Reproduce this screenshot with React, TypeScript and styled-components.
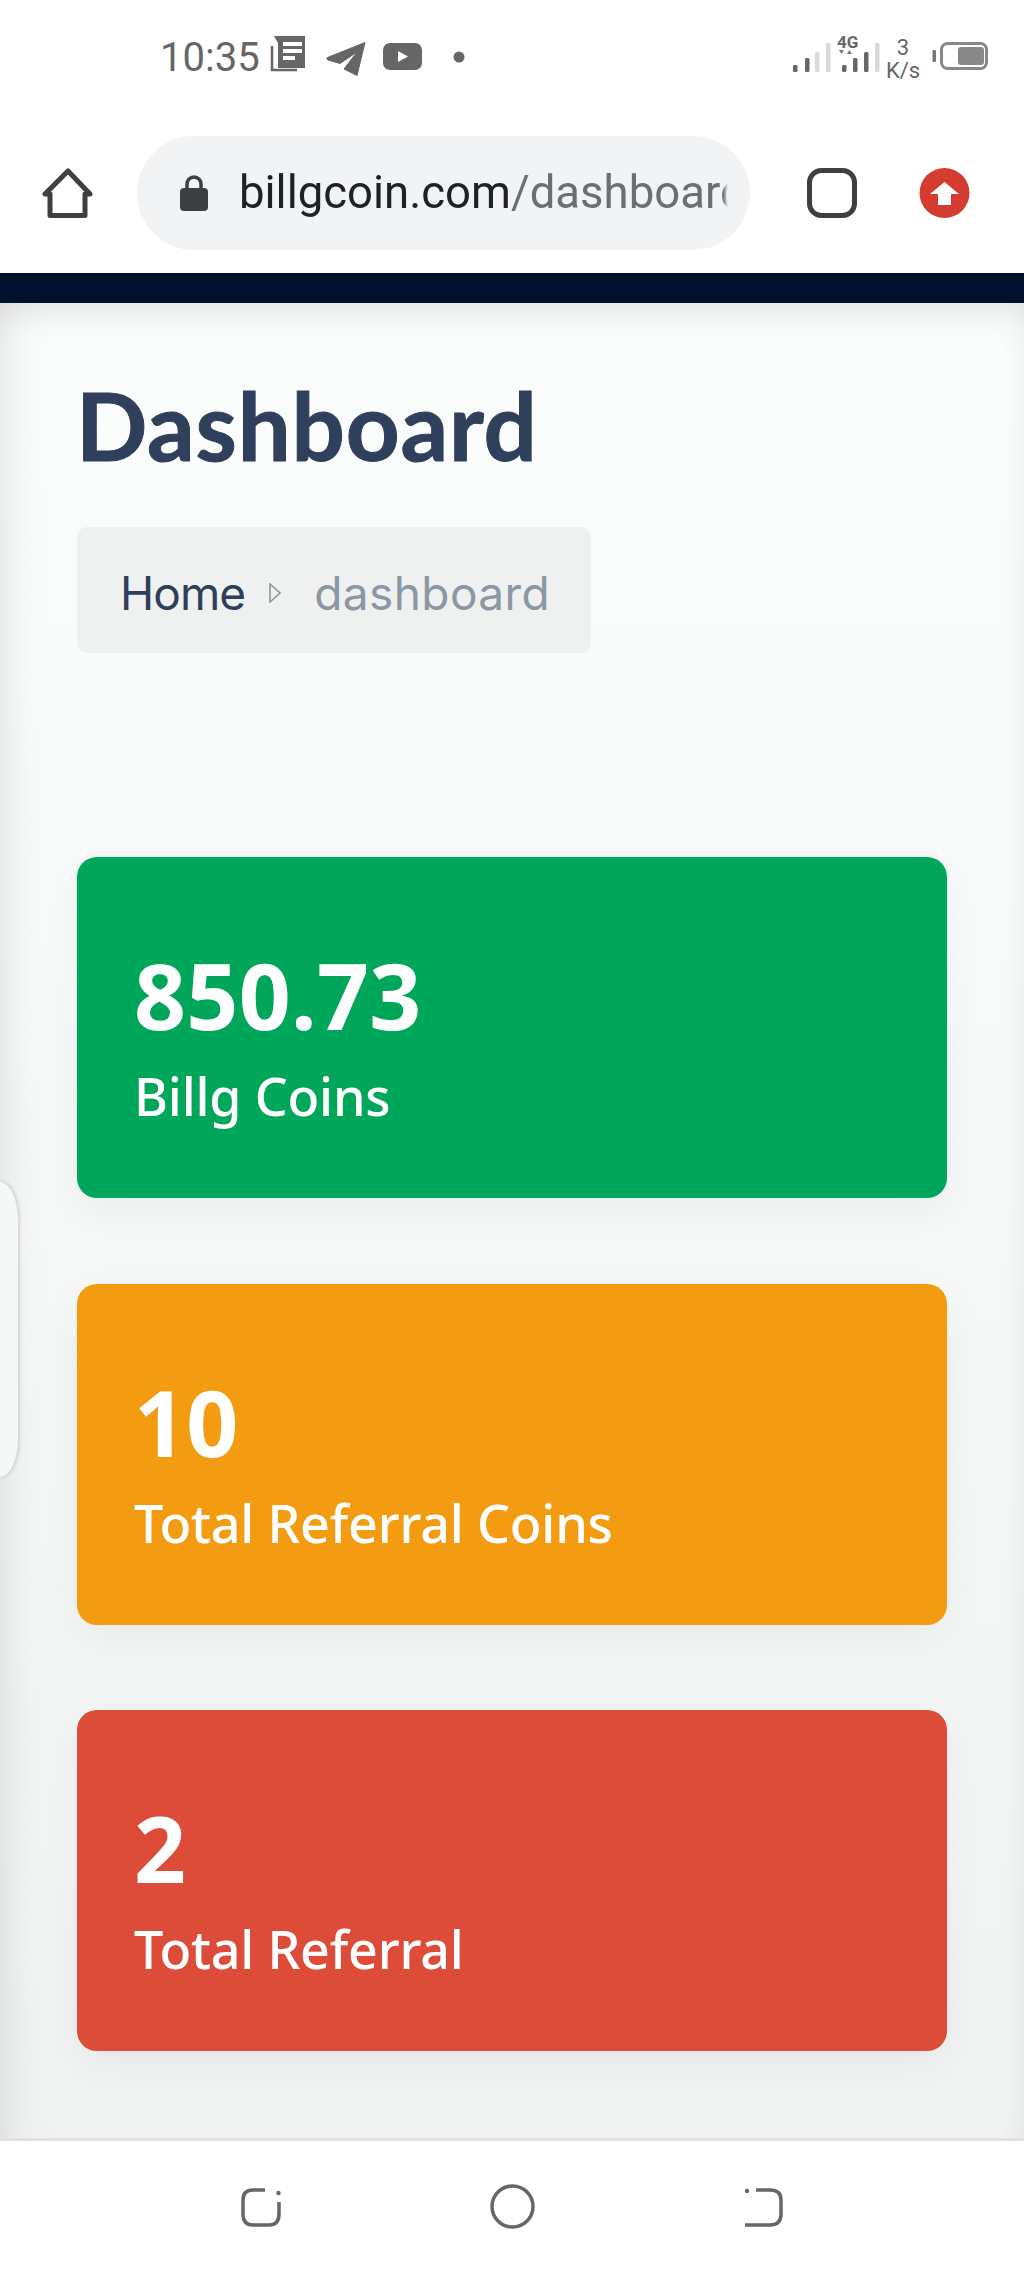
import React from "react";
import styled, { createGlobalStyle } from "styled-components";

const GlobalStyle = createGlobalStyle`
  html, body { margin: 0; padding: 0; background: #fff; }
  * { box-sizing: border-box; }
`;

const Page = styled.div`
  width: 1024px;
  height: 2275px;
  display: flex;
  flex-direction: column;
  overflow: hidden;
  font-family: "Noto Sans", sans-serif;
`;

/* phone status bar */
const StatusBar = styled.div`
  height: 112px;
  flex: none;
  display: flex;
  align-items: flex-start;
  justify-content: space-between;
  padding: 36px 36px 0 160px;
  color: #666;
`;
const StatusLeft = styled.div`
  display: flex;
  align-items: flex-start;
`;
const Clock = styled.span`
  font: 400 40px/44px Roboto, sans-serif;
  width: 110px;
`;
const StatusRight = styled.div`
  display: flex;
  align-items: flex-start;
`;
const StatusGlyph = styled.svg<{ $top?: number; $left?: number }>`
  flex: none;
  margin-top: ${(p) => p.$top ?? 0}px;
  margin-left: ${(p) => p.$left ?? 0}px;
`;
const Speed = styled.div`
  width: 46px;
  margin: 0 6px 0 0;
  display: flex;
  flex-direction: column;
  align-items: center;
  font: 400 22px/23px Roboto, sans-serif;
  color: #666;
`;

/* browser toolbar */
const Toolbar = styled.div`
  height: 161px;
  flex: none;
  display: flex;
  align-items: flex-start;
  padding: 24px 54px 0 42px;
`;
const ToolIcon = styled.svg<{ $left?: number }>`
  flex: none;
  margin-top: 32px;
  margin-left: ${(p) => p.$left ?? 0}px;
`;
const UrlPill = styled.div`
  width: 613px;
  height: 114px;
  margin: 0 57px 0 44px;
  border-radius: 57px;
  background: #f1f3f4;
  display: flex;
  align-items: center;
  padding: 0 22px 0 43px;
  flex: none;
`;
const LockIcon = styled.svg`
  flex: none;
`;
const UrlText = styled.div`
  margin-left: 31px;
  width: 490px;
  overflow: hidden;
  white-space: nowrap;
  font: 400 45.5px/60px Roboto, sans-serif;
  color: #202124;
  -webkit-mask-image: linear-gradient(to right, #000 99%, transparent 100%);
  mask-image: linear-gradient(to right, #000 99%, transparent 100%);
`;
const UrlPath = styled.span`
  color: #6b6f75;
`;
const NavyBar = styled.div`
  height: 30px;
  flex: none;
  background: #00112b;
`;

/* page content */
const Main = styled.main`
  position: relative;
  flex: 1;
  padding: 67px 77px 0;
  background: linear-gradient(to bottom, #fbfcfc 0%, #f9fbfa 30%, #f1f3f3 100%);
  box-shadow: inset 0 22px 36px -14px rgba(0, 0, 0, 0.1), inset 40px 0 40px -26px rgba(0, 0, 0, 0.06),
    inset -30px 0 30px -24px rgba(0, 0, 0, 0.02);
`;
const Title = styled.h1`
  margin: 0 0 0 -1px;
  font: 700 94px/110px Lato, sans-serif;
  letter-spacing: 0.8px;
  -webkit-text-stroke: 1px #303f5b;
  color: #303f5b;
`;
const Crumbs = styled.div`
  margin-top: 47px;
  width: 514px;
  height: 126px;
  border-radius: 10px;
  background: #eef1f0;
  display: flex;
  align-items: center;
  padding: 6px 0 0 43px;
  font: 400 46px/56px Inter, sans-serif;
`;
const CrumbHome = styled.span`
  color: #2f3e5a;
  letter-spacing: -0.9px;
`;
const CrumbCurrent = styled.span`
  color: #8b97a5;
  letter-spacing: 0.4px;
  margin-left: 33px;
`;
const CrumbArrow = styled.svg`
  margin-left: 24px;
  flex: none;
`;
const Cards = styled.div`
  margin-top: 204px;
  display: flex;
  flex-direction: column;
  gap: 85.5px;
`;
const Card = styled.div<{ $bg: string }>`
  height: 341px;
  border-radius: 20px;
  background: ${(p) => p.$bg};
  padding: 88px 57px 0;
  color: #fff;
  box-shadow: 0 12px 40px rgba(0, 0, 0, 0.05);
`;
const CardValue = styled.div`
  font: 700 91px/100px "Noto Sans", sans-serif;
  letter-spacing: 0.3px;
`;
const CardLabel = styled.div`
  margin-top: 21px;
  font: 500 52px/60px "Noto Sans", sans-serif;
  letter-spacing: -0.2px;
`;

/* the half hidden handle on the left edge */
const SideHandle = styled.div`
  position: absolute;
  left: 0;
  top: 879px;
  width: 18px;
  height: 295px;
  background: #f6f8f7;
  border-radius: 0 18px 18px 0 / 0 38px 38px 0;
  box-shadow: 1px 0 4px rgba(0, 0, 0, 0.18);
`;

/* android nav */
const BottomNav = styled.div`
  height: 137px;
  flex: none;
  background: #fff;
  border-top: 3px solid #dfe1e3;
  display: flex;
  align-items: flex-start;
  padding: 46px 0 0 240px;
`;
const NavIcon = styled.svg<{ $gap: number; $top?: number }>`
  flex: none;
  margin-right: ${(p) => p.$gap}px;
  margin-top: ${(p) => p.$top ?? 0}px;
`;

const NewsIcon = () => (
  <StatusGlyph width="36" height="36" viewBox="0 0 36 36">
    <path d="M4 0H35V32H8V7Z" fill="#666" />
    <path d="M2 10V34H27" fill="none" stroke="#666" strokeWidth="2.5" />
    <rect x="13" y="6" width="19" height="4" fill="#fff" />
    <rect x="13" y="13" width="19" height="4" fill="#fff" />
    <rect x="13" y="20" width="12" height="4" fill="#fff" />
  </StatusGlyph>
);

const TelegramIcon = () => (
  <StatusGlyph $top={6} $left={20} width="40" height="34" viewBox="0 0 40 34">
    <path d="M39 0.5L1.5 15.5Q0 17 2 18L14 21.5L31 10L18 27L31 33.5L39 0.5Z" fill="#666" stroke="#666" strokeLinejoin="round" />
  </StatusGlyph>
);

const YoutubeIcon = () => (
  <StatusGlyph $top={7} $left={17} width="39" height="27" viewBox="0 0 39 27">
    <rect width="39" height="27" rx="7" fill="#666" />
    <path d="M15 8L25 13.5L15 19Z" fill="#fff" />
  </StatusGlyph>
);

const Dot = () => (
  <StatusGlyph $top={15} $left={31} width="12" height="12" viewBox="0 0 12 12">
    <circle cx="6" cy="6" r="5.5" fill="#666" />
  </StatusGlyph>
);

const SimOne = () => (
  <StatusGlyph width="45" height="36" viewBox="0 0 45 36">
    <rect x="6" y="29" width="4.5" height="7" rx="1.5" fill="#666" />
    <rect x="18" y="22" width="4.5" height="14" rx="1.5" fill="#666" />
    <rect x="28" y="16" width="4.5" height="20" rx="1.5" fill="#d9d9d9" />
    <rect x="39" y="7" width="4.5" height="29" rx="1.5" fill="#d9d9d9" />
  </StatusGlyph>
);

const SimTwo = () => (
  <StatusGlyph width="48" height="36" viewBox="0 0 48 36">
    <text x="5" y="12" fontFamily="Roboto, sans-serif" fontWeight="700" fontSize="17" fill="#666">4G</text>
    <path d="M7 14H12L9.5 18ZM15 18H20L17.5 14Z" fill="#777" />
    <rect x="10" y="29" width="4.5" height="7" rx="1.5" fill="#666" />
    <rect x="21" y="22" width="4.5" height="14" rx="1.5" fill="#666" />
    <rect x="32" y="16" width="4.5" height="20" rx="1.5" fill="#666" />
    <rect x="43" y="7" width="4.5" height="29" rx="1.5" fill="#d9d9d9" />
  </StatusGlyph>
);

const Battery = () => (
  <StatusGlyph $top={6} width="56" height="28" viewBox="0 0 56 28">
    <rect x="0.5" y="8" width="3.5" height="12" rx="1" fill="#777" />
    <rect x="9.5" y="1.5" width="45" height="25" rx="6" fill="none" stroke="#888" strokeWidth="3" />
    <rect x="26" y="5" width="26" height="18" rx="3" fill="#888" />
  </StatusGlyph>
);

export default function App() {
  return (
    <>
      <GlobalStyle />
      <Page>
        <StatusBar>
          <StatusLeft>
            <Clock>10:35</Clock>
            <NewsIcon />
            <TelegramIcon />
            <YoutubeIcon />
            <Dot />
          </StatusLeft>
          <StatusRight>
            <SimOne />
            <SimTwo />
            <Speed>
              <span>3</span>
              <span>K/s</span>
            </Speed>
            <Battery />
          </StatusRight>
        </StatusBar>

        <Toolbar>
          <ToolIcon width="51" height="50" viewBox="0 0 51 50">
            <path d="M26 3L3 26H8V47.5H43V26H48Z" fill="none" stroke="#3c4043" strokeWidth="5" strokeLinejoin="round" />
          </ToolIcon>
          <UrlPill>
            <LockIcon width="28" height="36" viewBox="0 0 28 36">
              <path d="M7 15V9a7 7 0 0 1 14 0v6" fill="none" stroke="#3c4043" strokeWidth="3.5" />
              <rect y="13" width="28" height="23" rx="4" fill="#3c4043" />
            </LockIcon>
            <UrlText>
              billgcoin.com<UrlPath>/dashboard</UrlPath>
            </UrlText>
          </UrlPill>
          <ToolIcon width="50" height="50" viewBox="0 0 50 50">
            <rect x="2.5" y="2.5" width="45" height="45" rx="12" fill="none" stroke="#3c4043" strokeWidth="5" />
          </ToolIcon>
          <ToolIcon $left={62} width="51" height="50" viewBox="0 0 51 50">
            <circle cx="25.5" cy="25" r="25" fill="#d33c2e" />
            <path d="M25.5 14L40 26H32V37H19V26H11Z" fill="#fff" />
          </ToolIcon>
        </Toolbar>

        <NavyBar />

        <Main>
          <Title>Dashboard</Title>
          <Crumbs>
            <CrumbHome>Home</CrumbHome>
            <CrumbArrow width="12" height="20" viewBox="0 0 12 20">
              <path d="M1 1L11 10L1 19Z" fill="none" stroke="#8b97a5" strokeWidth="1.6" />
            </CrumbArrow>
            <CrumbCurrent>dashboard</CrumbCurrent>
          </Crumbs>
          <Cards>
            <Card $bg="#00a65a">
              <CardValue>850.73</CardValue>
              <CardLabel>Billg Coins</CardLabel>
            </Card>
            <Card $bg="#f39c12">
              <CardValue>10</CardValue>
              <CardLabel>Total Referral Coins</CardLabel>
            </Card>
            <Card $bg="#dd4b39">
              <CardValue>2</CardValue>
              <CardLabel>Total Referral</CardLabel>
            </Card>
          </Cards>
          <SideHandle />
        </Main>

        <BottomNav>
          <NavIcon $gap={208} width="42" height="40" viewBox="0 0 42 40">
            <path d="M25 3H13Q3 3 3 13V27Q3 38 13 38H29Q39 38 39 27V15" fill="none" stroke="#666" strokeWidth="3.5" />
            <circle cx="38.5" cy="6" r="2.2" fill="#666" />
          </NavIcon>
          <NavIcon $gap={209} $top={-3} width="45" height="45" viewBox="0 0 45 45">
            <circle cx="22.5" cy="22.5" r="20.5" fill="none" stroke="#666" strokeWidth="3.5" />
          </NavIcon>
          <NavIcon $gap={0} width="40" height="40" viewBox="0 0 40 40">
            <circle cx="3" cy="4" r="2.2" fill="#666" />
            <path d="M12 3H26Q37 3 37 13V27Q37 38 26 38H1" fill="none" stroke="#666" strokeWidth="3.5" />
          </NavIcon>
        </BottomNav>
      </Page>
    </>
  );
}
